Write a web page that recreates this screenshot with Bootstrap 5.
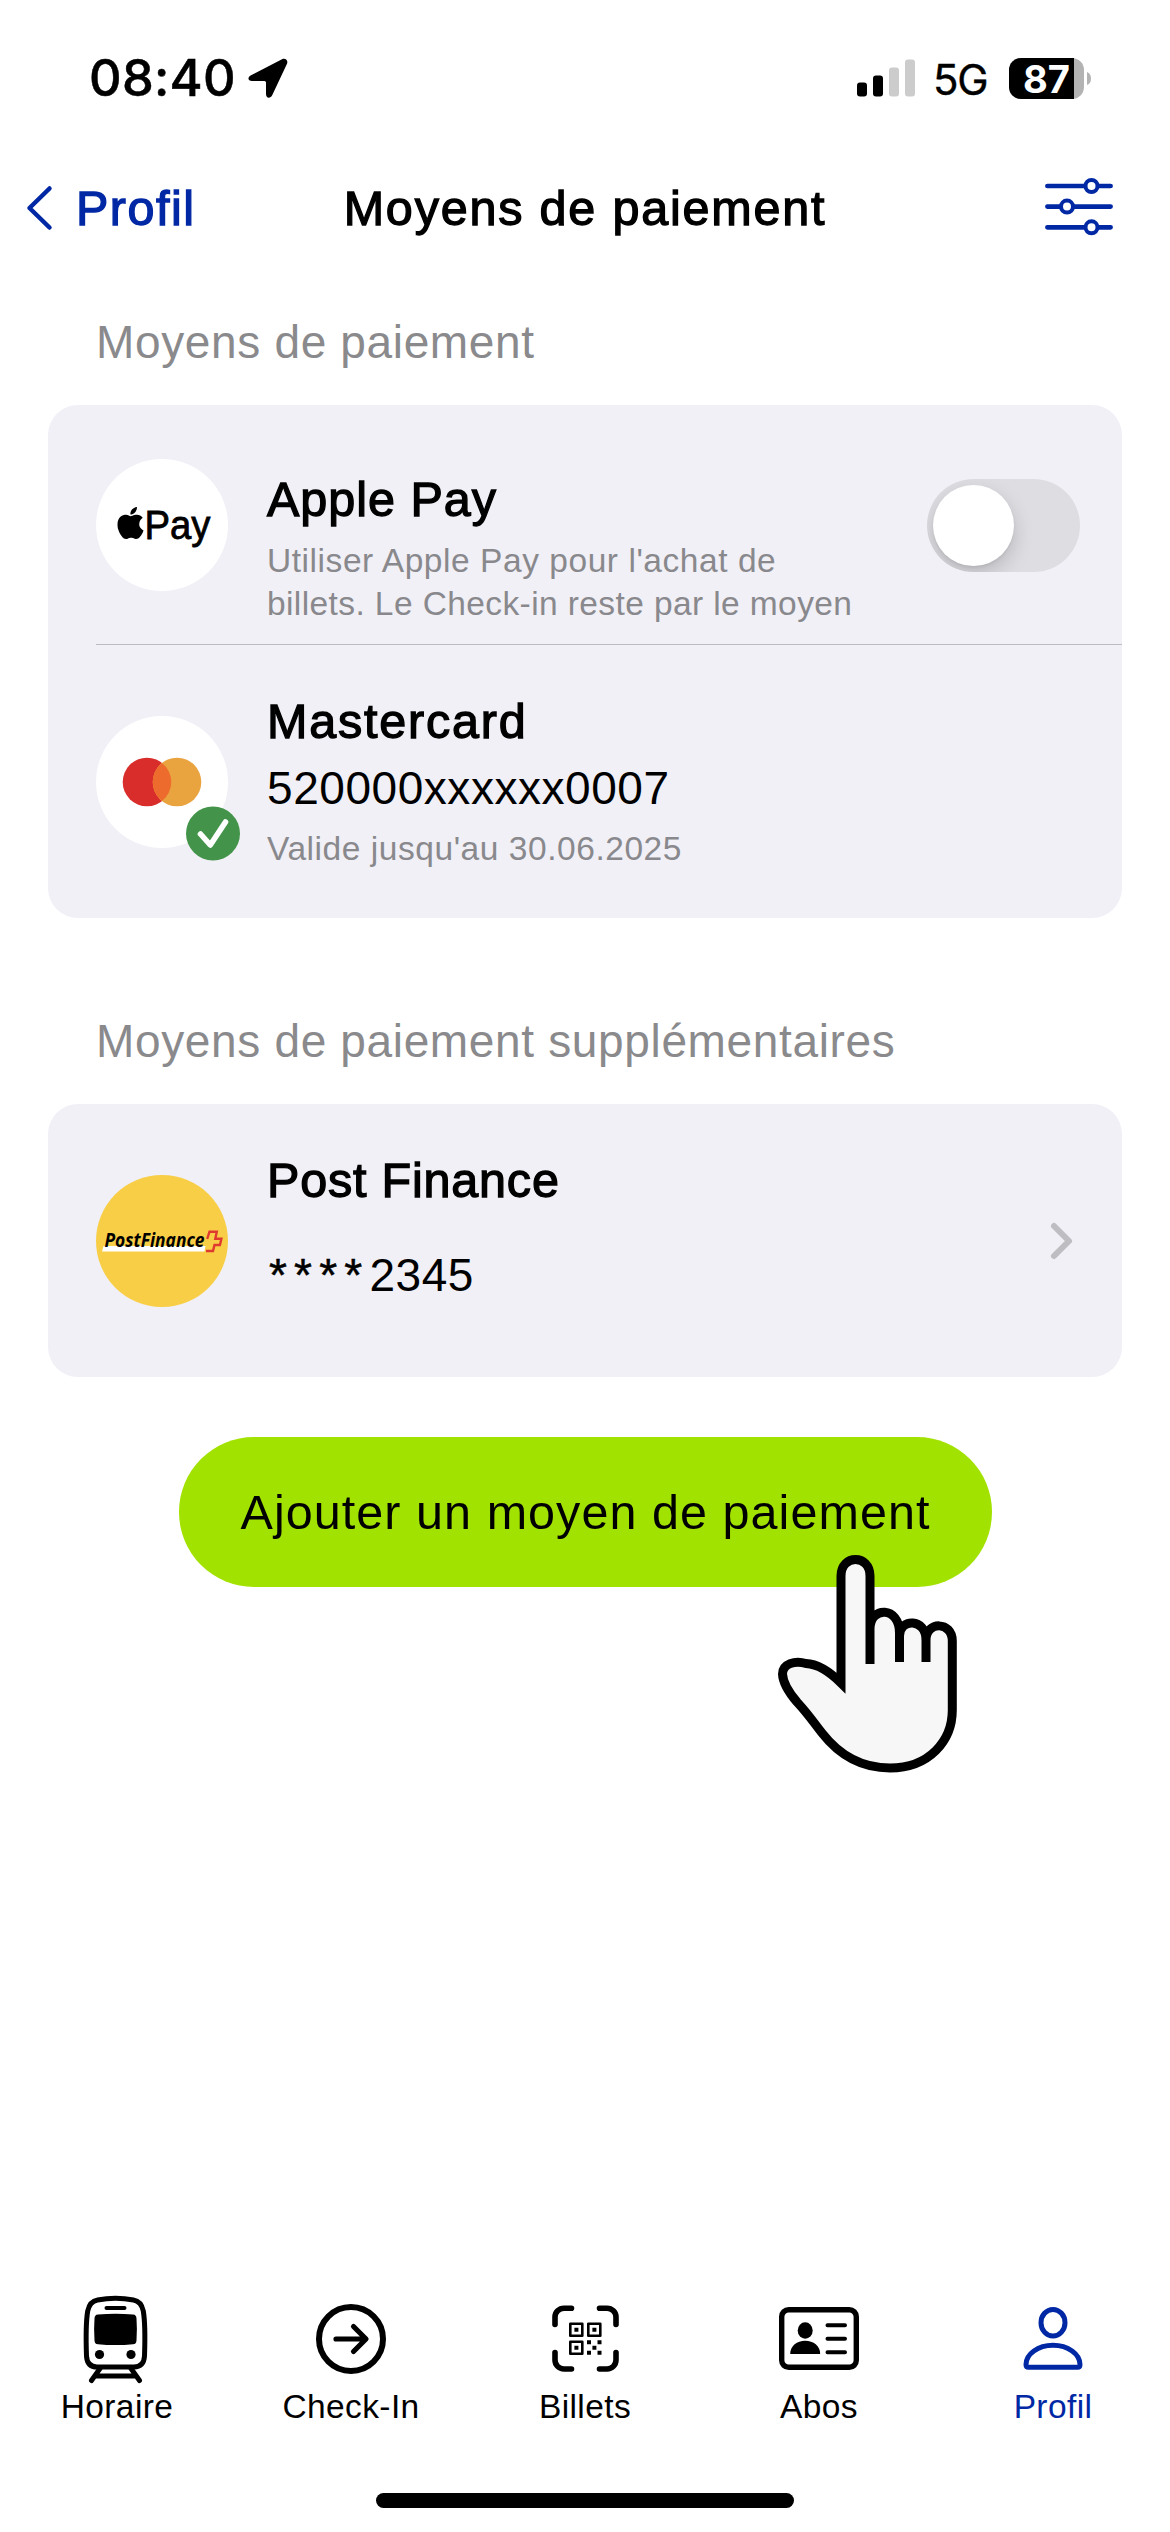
<!DOCTYPE html>
<html lang="fr">
<head>
<meta charset="utf-8">
<meta name="viewport" content="width=device-width, initial-scale=1">
<title>Moyens de paiement</title>
<link href="https://cdn.jsdelivr.net/npm/bootstrap@5.3.0/dist/css/bootstrap.min.css" rel="stylesheet">
<style>
  body { font-family: "Liberation Sans", Arial, sans-serif; color: #000; background: #fff; }
  svg { display: block; overflow: visible; flex: none; }
  .screen { width: 1170px; height: 2532px; overflow: hidden; }
  .brand-blue { color: #0028a5; }
  .status-bar { height: 156px; padding: 0 79px 0 89px; font-family: Inter, "Liberation Sans", sans-serif; }
  .clock { font-size: 50.5px; font-weight: 500; line-height: 60px; letter-spacing: .3px; width: 159px; -webkit-text-stroke: .5px currentColor; }
  .network { font-size: 42px; line-height: 50px; font-weight: 400; letter-spacing: -1.2px; width: 76px; margin-left: 18px; padding-top: 3px; -webkit-text-stroke: .4px currentColor; }
  .title-bar { height: 104px; padding: 0 57px 0 27px; }
  .medium-text { font-size: 48.5px; line-height: 58px; letter-spacing: 1.8px; -webkit-text-stroke: 1.3px currentColor; }
  .title-side { width: 250px; }
  .title-side.narrow { width: 220px; }
  .back-link { gap: 24px; letter-spacing: 1.5px; }
  .section-title { font-size: 46px; line-height: 60px; letter-spacing: .65px; color: #8a8a8d; margin: 52px 0 33px 96px; font-weight: 400; }
  .section-title.second { margin-top: 93px; }
  .pay-card { margin: 0 48px; border: 0; border-radius: 30px; background: #f1f0f6; }
  .pay-row { height: 273px; padding-left: 48px; gap: 39px; }
  .pay-row.first { height: 240px; }
  .pay-row.first::after { content: ""; position: absolute; left: 48px; right: 0; bottom: 0; height: 1px; background: #bbbbc0; }
  .logo-disc { width: 132px; height: 132px; }
  .valid-mark { position: absolute; left: 90px; top: 91px; }
  .pay-text { align-self: flex-start; padding-top: 47px; }
  .first .pay-text { padding-top: 65px; }
  .apple-name { letter-spacing: 1px; }
  .post-name { letter-spacing: .8px; }
  .account { font-size: 46px; line-height: 56px; letter-spacing: .55px; margin-top: 10px; white-space: nowrap; }
  .account.lower { margin-top: 38px; }
  .stars { padding-left: 2px; letter-spacing: 7.2px; -webkit-text-stroke: .5px currentColor; }
  .note { font-size: 33.5px; line-height: 43px; letter-spacing: .55px; color: #89898d; margin-top: 11px; white-space: nowrap; }
  .note .tighter { letter-spacing: .4px; }
  .pay-switch { width: 153px; height: 93px; padding: 6px; border-radius: 47px; background: #dddde2; margin-right: 42px; overflow: hidden; }
  .pay-knob { width: 81px; height: 81px; border-radius: 50%; background: #fff; box-shadow: 0 8px 20px rgba(0,0,0,.17), 0 2px 3px rgba(0,0,0,.06); }
  .disclosure { margin-right: 50px; }
  .add-button { width: 813px; height: 150px; margin: 60px auto 0 179px; border: 0; border-radius: 75px; background: #a2e200; color: #000; font-size: 48.5px; letter-spacing: 1.05px; padding: 0; }
  .hand { position: absolute; left: 597px; top: 116px; }
  .tab-icon { height: 97px; }
  .tab-label { font-size: 33.5px; line-height: 40px; letter-spacing: .4px; }
  .home-bar { width: 418px; height: 15px; border-radius: 8px; background: #000; margin: 66px auto 24px; }
</style>
</head>
<body>
<div class="screen d-flex flex-column">

  <div class="status-bar d-flex align-items-center">
    <div class="clock">08:40</div>
    <svg width="40" height="40" viewBox="0 0 40 40"><path d="M34 1.3 3 17.2C-.8 19.2-.2 23 4 23h12.500q1.500 0 1.500 1.500V36c0 4.600 4.500 4.800 6.300 1L39 5.800C40.400 2.500 37.500-.4 34 1.300Z"/></svg>
    <svg class="ms-auto" width="58" height="38" viewBox="0 0 58 38"><rect y="23.500" width="10" height="14" rx="3"/><rect x="16" y="16.500" width="10" height="21" rx="3"/><g fill="#ccc"><rect x="32" y="8.500" width="10" height="29" rx="3"/><rect x="48" y=".5" width="10" height="37" rx="3"/></g></svg>
    <div class="network">5G</div>
    <svg width="82" height="41" viewBox="0 0 82 41"><rect width="75" height="41" rx="12" fill="#b3b3b3"/><path d="M12 0H65V41H12A12 12 0 0 1 0 29V12A12 12 0 0 1 12 0Z"/><path d="M78 14q4 1.500 4 6.500t-4 6.500Z" fill="#b3b3b3"/><text x="14" y="34.500" fill="#fff" font-size="38.500" font-weight="700" textLength="47" lengthAdjust="spacingAndGlyphs">87</text></svg>
  </div>

  <header class="title-bar d-flex align-items-center justify-content-between">
    <div class="title-side back-link medium-text brand-blue d-flex align-items-center">
      <svg width="25" height="44" viewBox="0 0 25 44" fill="none" stroke="currentColor" stroke-width="4.500" stroke-linecap="round" stroke-linejoin="round"><path d="M22.500 2.500 2.500 22l20 19.500"/></svg>
      <span>Profil</span>
    </div>
    <div class="medium-text">Moyens de paiement</div>
    <div class="title-side narrow brand-blue d-flex justify-content-end">
      <svg width="68" height="60" viewBox="0 0 68 60" fill="#fff" stroke="currentColor" stroke-width="4.700" stroke-linecap="round"><path d="M2.400 8H65.600M2.400 28.600H65.600M2.400 49.300H65.600"/><g stroke-width="4"><circle cx="46.500" cy="8" r="6"/><circle cx="22" cy="28.600" r="6"/><circle cx="46.500" cy="49.300" r="6"/></g></svg>
    </div>
  </header>

  <main>
    <h2 class="section-title">Moyens de paiement</h2>
    <section class="card pay-card">
      <div class="pay-row first position-relative d-flex align-items-center">
        <svg class="logo-disc" viewBox="0 0 132 132"><circle cx="66" cy="66" r="66" fill="#fff"/><path transform="translate(18.500 48) scale(2)" d="M11.182.008C11.148-.03 9.923.023 8.857 1.180c-1.066 1.156-.902 2.482-.878 2.516s1.520.087 2.475-1.258.762-2.391.728-2.430m3.314 11.733c-.048-.096-2.325-1.234-2.113-3.422s1.675-2.789 1.698-2.854-.597-.79-1.254-1.157a3.700 3.700 0 0 0-1.563-.434c-.108-.003-.483-.095-1.254.116-.508.139-1.653.589-1.968.607-.316.018-1.256-.522-2.267-.665-.647-.125-1.333.131-1.824.328-.49.196-1.422.754-2.074 2.237-.652 1.482-.311 3.830-.067 4.560s.625 1.924 1.273 2.796c.576.984 1.340 1.667 1.659 1.899s1.219.386 1.843.067c.502-.308 1.408-.485 1.766-.472.357.013 1.061.154 1.782.539.571.197 1.111.115 1.652-.105.541-.221 1.324-1.059 2.238-2.758q.52-1.185.473-1.282"/><text x="48.500" y="79.500" font-size="41" stroke="#000" stroke-width=".8" textLength="66" lengthAdjust="spacingAndGlyphs">Pay</text></svg>
        <div class="pay-text">
          <div class="medium-text apple-name">Apple Pay</div>
          <div class="note">Utiliser Apple Pay pour l'achat de<br><span class="tighter">billets. Le Check-in reste par le moyen</span></div>
        </div>
        <div class="pay-switch ms-auto" role="switch" aria-checked="false"><div class="pay-knob"></div></div>
      </div>
      <div class="pay-row d-flex align-items-center">
        <div class="position-relative">
          <svg class="logo-disc" viewBox="0 0 132 132"><circle cx="66" cy="66" r="66" fill="#fff"/><circle cx="51" cy="66" r="24.300" fill="#d92d2b"/><circle cx="81" cy="66" r="24.300" fill="#e9a33f"/><path d="M66 46.900a24.300 24.300 0 0 1 0 38.200a24.300 24.300 0 0 1 0-38.200Z" fill="#ed6b2d"/></svg>
          <svg class="valid-mark" width="54" height="54" viewBox="0 0 54 54"><circle cx="27" cy="26.500" r="27" fill="#43944a"/><path d="M14.500 27 24.300 38 39.500 15" fill="none" stroke="#fff" stroke-width="5.600" stroke-linecap="round" stroke-linejoin="round"/></svg>
        </div>
        <div class="pay-text">
          <div class="medium-text">Mastercard</div>
          <div class="account">520000xxxxxx0007</div>
          <div class="note">Valide jusqu'au 30.06.2025</div>
        </div>
      </div>
    </section>

    <h2 class="section-title second">Moyens de paiement supplémentaires</h2>
    <section class="card pay-card">
      <div class="pay-row d-flex align-items-center">
        <svg class="logo-disc" viewBox="0 0 132 132"><circle cx="66" cy="66" r="66" fill="#f8ce46"/><path d="M7.500 71H109.500L108.500 76.500H6Z" fill="#fff"/><text x="8.500" y="72.200" font-family="Open Sans, Noto Sans, sans-serif" font-size="19.500" font-weight="700" font-style="italic" textLength="100" lengthAdjust="spacingAndGlyphs">PostFinance</text><path d="m111.200 64 2.300-7.300h7.300l-1.500 7h6.100l-1.500 6.300h-5.400l-1.500 6h-7" fill="none" stroke="#df3a2f" stroke-width="2.400"/></svg>
        <div class="pay-text">
          <div class="medium-text post-name">Post Finance</div>
          <div class="account lower"><span class="stars">****</span>2345</div>
        </div>
        <svg class="disclosure ms-auto" width="21" height="36" viewBox="0 0 21 36"><path d="M3 3 18 18 3 33" fill="none" stroke="#bdbdc2" stroke-width="6" stroke-linecap="round" stroke-linejoin="round"/></svg>
      </div>
    </section>

    <button class="btn add-button position-relative d-block" type="button">Ajouter un moyen de paiement
      <svg class="hand" width="184" height="222" viewBox="776 1553 184 222"><path d="M870 1664V1576C870 1554 841 1554 841 1576V1683C831 1671 817 1664 808 1663C795 1659 783 1664 782.500 1675C783 1685 791 1695 797 1702C809 1715 814 1723 822 1733C836 1751 857 1768 890 1768C929 1768 952.300 1741 952.300 1710V1641C952.300 1621 926 1621 926 1640V1662H870Z" fill="#f7f7f7"/><path d="M870 1633C870 1606 899.500 1606 899.500 1633V1664H870ZM899.500 1640C899.500 1618 926 1618 926 1640V1664H899.500Z" fill="#f7f7f7"/><path d="M870 1664V1576C870 1554 841 1554 841 1576V1683C829 1671 817 1664 806 1663.500C795 1660 782.500 1664 782.500 1674C783 1685 791 1695 797 1702C809 1715 814 1723 822 1733C836 1751 857 1768 890 1768C929 1768 952.300 1741 952.300 1710V1641C952.300 1621 926 1621 926 1640V1662M870 1629C870 1606 899.500 1606 899.500 1633V1662M899.500 1636C899.500 1618 926 1618 926 1640" fill="none" stroke="#000" stroke-width="9" stroke-miterlimit="10"/></svg>
    </button>
  </main>

  <footer class="mt-auto">
    <nav class="row g-0 text-center">
      <div class="col">
        <div class="tab-icon d-flex align-items-center justify-content-center">
          <svg width="66" height="88" viewBox="84 2294 66 88"><g fill="none" stroke="#000" stroke-width="5"><path d="M97.500 2299q18-3.500 36 0c6 1 8.500 5 9.800 11 1.500 9 1.700 31 1.200 45-.4 7-3.500 11-10.500 11H97c-7 0-10.100-4-10.500-11-.5-14-.3-36 1.200-45 1.300-6 3.800-10 9.800-11Z"/><path d="M106.500 2307h18" stroke-width="4" stroke-linecap="round"/><path d="M100 2367.500 91.500 2379.500M131 2367.500l8.500 12M96 2375h39" stroke-linecap="round"/></g><path d="M98 2313.500q17.500-1.500 35 0c2.500.2 3.300 1.500 3.500 4q.8 10.500 0 22c-.2 2.500-1 3.500-3.500 3.700q-17.500 1.800-35 0c-2.500-.2-3.300-1.200-3.500-3.700q-.8-11.500 0-22c.2-2.500 1-3.800 3.500-4Z"/><circle cx="99.500" cy="2353.500" r="4.600"/><circle cx="131" cy="2353.500" r="4.600"/></svg>
        </div>
        <div class="tab-label">Horaire</div>
      </div>
      <div class="col">
        <div class="tab-icon d-flex align-items-center justify-content-center">
          <svg width="70" height="70" viewBox="0 0 70 70" fill="none" stroke="#000" stroke-linecap="round" stroke-linejoin="round"><circle cx="35" cy="35" r="32" stroke-width="6"/><path d="M20 35H49.500M37.500 22.500 50 35 37.500 47.500" stroke-width="5.200"/></svg>
        </div>
        <div class="tab-label">Check-In</div>
      </div>
      <div class="col">
        <div class="tab-icon d-flex align-items-center justify-content-center">
          <svg width="67" height="67" viewBox="0 0 67 67"><path d="M19.500 3.200H12a9 9 0 0 0-9 9V19.500M47.500 3.200H55a9 9 0 0 1 9 9V19.500M3 47.500V55a9 9 0 0 0 9 9h7.500M64 47.500V55a9 9 0 0 1-9 9H47.500" fill="none" stroke="#000" stroke-width="5.600" stroke-linecap="round"/><g fill="none" stroke="#000" stroke-width="2.600" stroke-linejoin="round"><path d="M18.300 18.700h12v12h-12ZM36.300 18.700h12v12h-12ZM18.300 36.700h12v12h-12Z"/></g><path d="M22.400 22.700h4v4h-4ZM40.400 22.700h4v4h-4ZM22.400 40.700h4v4h-4ZM35 35.300h4v4h-4ZM45.500 35.300h4v4h-4ZM40.400 40.700h4v4h-4ZM35 45.700h4v4h-4ZM45.500 45.700h4v4h-4Z"/></svg>
        </div>
        <div class="tab-label">Billets</div>
      </div>
      <div class="col">
        <div class="tab-icon d-flex align-items-center justify-content-center">
          <svg width="80" height="63" viewBox="0 0 80 63"><rect x="2.700" y="2.700" width="74.600" height="57.600" rx="7" fill="none" stroke="#000" stroke-width="5.400"/><ellipse cx="26.200" cy="23.500" rx="7.500" ry="8.300"/><path d="M11.200 47C11.200 39 18 33.800 26.200 33.800S41.200 39 41.200 47Z"/><path d="M48.500 18.200H66M48.500 31.700H66M48.500 45.200H66" stroke="#000" stroke-width="4" stroke-linecap="round"/></svg>
        </div>
        <div class="tab-label">Abos</div>
      </div>
      <div class="col brand-blue">
        <div class="tab-icon d-flex align-items-center justify-content-center">
          <svg width="60" height="63" viewBox="0 0 60 63" fill="none" stroke="currentColor" stroke-width="5"><ellipse cx="30" cy="15.700" rx="12" ry="13.300"/><path d="M5.500 60.300H54.500Q57 60.300 57 57.500C57 47 45 38.300 30 38.300S3 47 3 57.500Q3 60.300 5.500 60.300Z"/></svg>
        </div>
        <div class="tab-label">Profil</div>
      </div>
    </nav>
    <div class="home-bar"></div>
  </footer>
</div>
<script src="https://cdn.jsdelivr.net/npm/bootstrap@5.3.0/dist/js/bootstrap.bundle.min.js"></script>
</body>
</html>
